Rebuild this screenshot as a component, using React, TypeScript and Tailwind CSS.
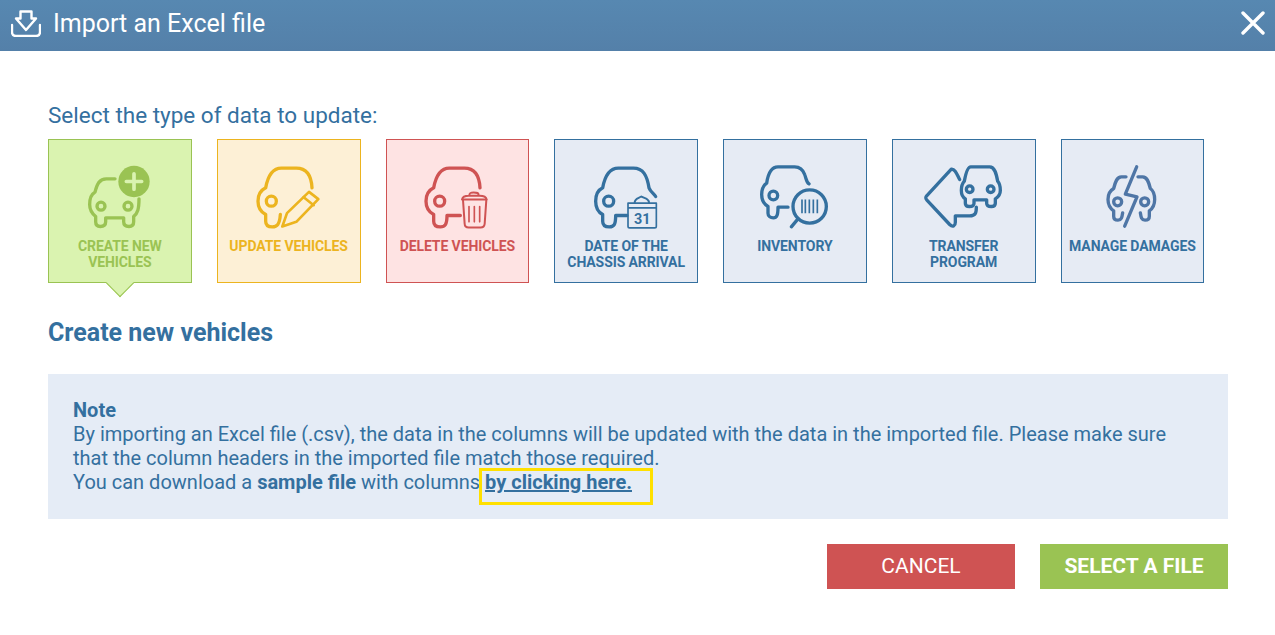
import React from 'react';

const FONT = "font-['Roboto',sans-serif]";

interface VehicleType {
  label: string[];
  box: string;
  text: string;
  view: string;
  icon: React.ReactNode;
}

const VEHICLE_TYPES: VehicleType[] = [
  {
    label: ['CREATE NEW', 'VEHICLES'],
    box: 'border-[#9ac353] bg-[#daf3b0]',
    text: 'text-[#9ac353]',
    view: '28 30 426 291',
    icon: (
      <>
        <path d="M226 145H200C180 145 172 160 166 185C152 193 150 205 150 222C150 240 158 250 168 258V274C168 284 174 288 182 288C192 288 198 284 198 274V262H252V274C252 284 258 288 268 288C276 288 282 284 282 274V258C294 248 298 235 298 205" />
        <circle cx="184" cy="227" r="12" />
        <circle cx="265" cy="227" r="12" />
        <circle cx="283" cy="153" r="47" fill="currentColor" stroke="none" />
        <path d="M283 130V176M260 153H306" stroke="#daf3b0" strokeWidth="11" />
      </>
    ),
  },
  {
    label: ['UPDATE VEHICLES'],
    box: 'border-[#ecb41f] bg-[#fdf0d6]',
    text: 'text-[#ecb41f]',
    view: '535 30 426 291',
    icon: (
      <>
        <path d="M817 172C815 135 800 113 770 113H725C700 113 685 135 678 172C662 180 655 195 655 212C655 232 665 245 678 252V272C678 284 686 289 698 289C712 289 720 282 722 252" />
        <circle cx="695" cy="212" r="15" />
        <path d="M728 288L742 248L808 184L836 206L770 274Z" strokeLinecap="butt" strokeWidth="8" />
        <path d="M792 200L822 224" strokeWidth="8" />
      </>
    ),
  },
  {
    label: ['DELETE VEHICLES'],
    box: 'border-[#cf5353] bg-[#fee3e3]',
    text: 'text-[#cf5353]',
    view: '22 30 426 291',
    icon: (
      <>
        <path d="M304 172C302 135 287 113 257 113H212C187 113 172 135 165 172C149 180 142 195 142 212C142 232 152 245 165 252V272C165 284 173 289 185 289C199 289 205 282 205 255H245" />
        <circle cx="183" cy="212" r="15" />
        <path d="M250 207C252 198 262 196 270 196H303C312 196 322 198 324 207ZM272 195C272 187 276 186 285 186C296 186 300 187 300 195" strokeWidth="6" />
        <path d="M253 208L258 280C258 288 264 291 270 291H306C312 291 317 288 318 280L323 208" strokeWidth="6" />
        <path d="M271 228V274M287 228V274M303 228V274" strokeWidth="5" />
      </>
    ),
  },
  {
    label: ['DATE OF THE', 'CHASSIS ARRIVAL'],
    box: 'border-[#34709f] bg-[#e6ebf4]',
    text: 'text-[#34709f]',
    view: '526 30 426 291',
    icon: (
      <>
        <path d="M828 198C822 188 813 185 808 172C802 135 791 113 761 113H716C691 113 676 135 669 172C653 180 648 195 648 212C648 232 656 245 669 252V272C669 284 677 289 689 289C703 289 708 282 708 255H742" />
        <circle cx="687" cy="212" r="15" />
        <path d="M745 218H830V287C830 290 828 292 825 292H750C747 292 745 290 745 287ZM745 232H830" strokeWidth="5" />
        <path d="M765 216C765 204 775 204 785 198C795 204 808 204 808 216" strokeWidth="6" />
        <text x="788" y="280" textAnchor="middle" className="font-['Roboto',sans-serif]" fontSize="43" fontWeight="700" fill="currentColor" stroke="none">31</text>
      </>
    ),
  },
  {
    label: ['INVENTORY'],
    box: 'border-[#34709f] bg-[#e6ebf4]',
    text: 'text-[#34709f]',
    view: '28 30 426 291',
    icon: (
      <>
        <path d="M283 160C275 155 275 145 270 132C264 115 255 109 240 109H190C170 109 160 130 156 158C145 165 141 178 141 192C141 210 150 222 160 228V248C160 258 168 262 176 262C186 262 190 255 190 230H220" />
        <circle cx="176" cy="195" r="13" />
        <circle cx="285" cy="228" r="50" strokeWidth="10" />
        <path d="M250 265L230 289" />
        <path d="M262 207V248M272 207V248M284 207V248M296 207V248M308 207V248" strokeWidth="5" strokeLinecap="butt" />
      </>
    ),
  },
  {
    label: ['TRANSFER', 'PROGRAM'],
    box: 'border-[#34709f] bg-[#e6ebf4]',
    text: 'text-[#34709f]',
    view: '535 30 426 291',
    icon: (
      <>
        <path d="M735 147C728 135 722 114 710 116L636 196C632 201 632 203 636 208L705 282C715 292 722 285 722 275V256H765C782 256 785 248 785 230" />
        <path d="M768 109H825C840 109 845 130 849 152C856 160 857 170 857 180C857 192 850 200 842 205V218C842 226 836 228 830 228C822 228 816 226 816 218V208H778V218C778 226 772 228 764 228C758 228 752 226 752 218V205C744 200 740 192 740 180C740 170 742 160 749 152C753 130 758 109 768 109Z" />
        <circle cx="765" cy="176" r="10" />
        <circle cx="828" cy="176" r="10" />
      </>
    ),
  },
  {
    label: ['MANAGE DAMAGES'],
    box: 'border-[#34709f] bg-[#e6ebf4]',
    text: 'text-[#34709f]',
    view: '37 421 426 291',
    icon: (
      <g className="text-[#4f76a6]">
        <path d="M264 500L230 582L265 590L228 678" />
        <path d="M232 530H218C205 530 200 545 195 565C183 572 178 585 178 598C178 612 185 625 195 632V648C195 658 200 660 208 660C218 660 220 652 222 638" />
        <path d="M268 530H282C295 530 300 545 305 565C315 572 318 585 318 598C318 612 312 625 302 632V648C302 658 297 660 289 660C279 660 277 652 275 638" />
        <circle cx="207" cy="605" r="12" />
        <circle cx="288" cy="605" r="12" />
      </g>
    ),
  },
];

const TypeCard: React.FC<{ item: VehicleType; selected?: boolean }> = ({ item, selected }) => (
  <div className={`relative flex h-[144px] w-[143.75px] shrink-0 flex-col items-center border ${item.box}`}>
    <svg
      viewBox={item.view}
      className={`block h-[98px] w-[142px] shrink-0 ${item.text}`}
      fill="none"
      stroke="currentColor"
      strokeWidth="10"
      strokeLinecap="round"
      strokeLinejoin="round"
    >
      {item.icon}
    </svg>
    <div className={`text-center text-[14px] font-bold leading-[16px] tracking-[-0.1px] whitespace-nowrap ${item.text}`}>
      {item.label.map(line => (
        <div key={line}>{line}</div>
      ))}
    </div>
    {selected && (
      <div className={`absolute bottom-[-11px] left-[61px] h-[20px] w-[20px] rotate-45 border-t-0 border-l-0 border ${item.box}`} />
    )}
  </div>
);

export default function App() {
  return (
    <div className={`h-[635px] w-[1275px] overflow-hidden bg-white ${FONT}`}>
      <div className="flex h-[51px] items-center justify-between bg-gradient-to-b from-[#5788b1] to-[#5480a9] pb-[5px] pl-[11px] pr-[10px]">
        <div className="flex items-center gap-[12px]">
          <svg viewBox="0 0 30 28" className="h-[28px] w-[30px]" fill="none" stroke="white" strokeWidth="2.4" strokeLinecap="round" strokeLinejoin="round">
            <path d="M1 16V23C1 25.5 2.5 27 5 27H25C27.5 27 29 25.5 29 23V16" />
            <path d="M9.5 2.5H20.5V9.5H25L15 21L5 9.5H9.5Z" />
          </svg>
          <span className="text-[25px] leading-none text-white">Import an Excel file</span>
        </div>
        <svg viewBox="0 0 24 24" className="h-[24px] w-[24px]" fill="none" stroke="white" strokeWidth="3.4" strokeLinecap="round">
          <path d="M2 2L22 22M22 2L2 22" />
        </svg>
      </div>

      <div className="px-[48px] pt-[50px]">
        <h2 className="text-[22.5px] font-normal leading-[28px] text-[#34709f]">Select the type of data to update:</h2>

        <div className="mt-[10px] flex gap-[25px]">
          {VEHICLE_TYPES.map((item, i) => (
            <TypeCard key={item.label[0]} item={item} selected={i === 0} />
          ))}
        </div>

        <h3 className="mt-[36px] text-[25px] font-bold leading-[28px] text-[#34709f]">Create new vehicles</h3>

        <div className="mt-[27px] h-[145px] w-[1180px] bg-[#e5ecf6] px-[25px] pt-[24px] text-[20px] leading-[24px] text-[#34709f]">
          <div className="font-bold">Note</div>
          <div>By importing an Excel file (.csv), the data in the columns will be updated with the data in the imported file. Please make sure</div>
          <div>that the column headers in the imported file match those required.</div>
          <div>
            You can download a <b>sample file</b> with columns{' '}
            <a className="relative font-bold underline">
              by clicking here.
              <span className="absolute -top-[2px] -left-[6px] h-[37px] w-[174px] border-[3px] border-[#ffe000]" />
            </a>
          </div>
        </div>

        <div className="mt-[25px] -mr-[1px] flex justify-end gap-[25px]">
          <button className="h-[45px] w-[188px] bg-[#cf5353] text-[21px] font-normal text-white">CANCEL</button>
          <button className="h-[45px] w-[188px] bg-[#9ac353] text-[21px] font-bold text-white">SELECT A FILE</button>
        </div>
      </div>
    </div>
  );
}
